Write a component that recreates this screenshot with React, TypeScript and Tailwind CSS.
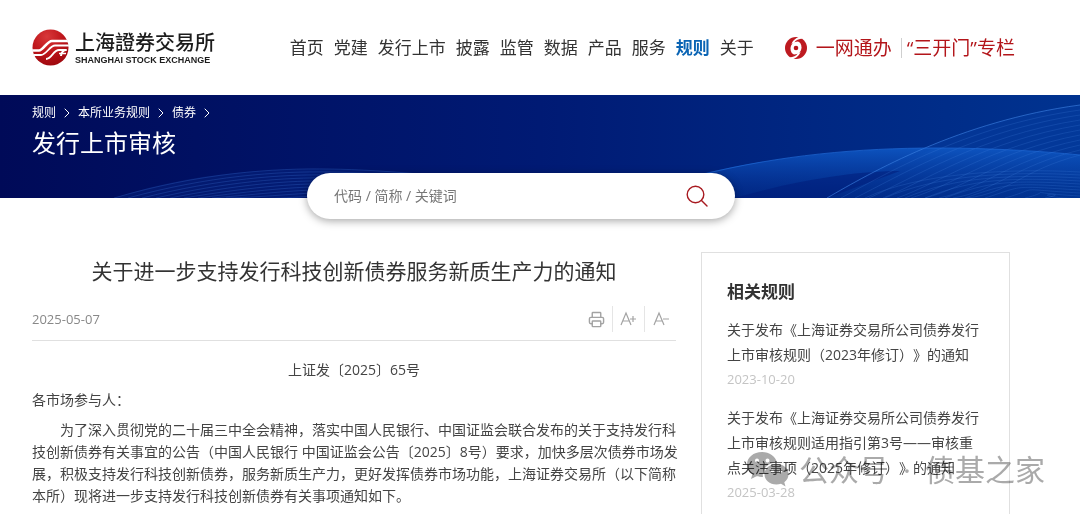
import { ChevronRight, Printer } from 'lucide-react';

const navItems = ['首页', '党建', '发行上市', '披露', '监管', '数据', '产品', '服务', '规则', '关于'];

const breadcrumbs = ['规则', '本所业务规则', '债券'];

const relatedRules = [
  { title: '关于发布《上海证券交易所公司债券发行上市审核规则（2023年修订）》的通知', date: '2023-10-20' },
  { title: '关于发布《上海证券交易所公司债券发行上市审核规则适用指引第3号——审核重点关注事项（2025年修订）》的通知', date: '2025-03-28' },
];

const steps = [1, 2, 3, 4, 5, 6, 7, 8, 9, 10];

function Logo() {
  return (
    <a href="#" className="flex shrink-0 items-center gap-[6px]">
      <svg viewBox="0 0 37 37" className="h-[37px] w-[37px]" aria-hidden="true">
        <defs>
          <radialGradient id="ball" cx="0.4" cy="0.2" r="0.85">
            <stop offset="0" stopColor="#d8383a" />
            <stop offset="0.5" stopColor="#bf161b" />
            <stop offset="1" stopColor="#9c070d" />
          </radialGradient>
          <clipPath id="ballClip">
            <circle cx="18.5" cy="18.5" r="18.5" />
          </clipPath>
        </defs>
        <circle cx="18.5" cy="18.5" r="18" fill="url(#ball)" />
        <g clipPath="url(#ballClip)" fill="none" stroke="#fff" strokeLinejoin="round">
          <path d="M0 21.5H7C11 21.5 15 12 20 12H37" strokeWidth="2.6" />
          <path d="M0 26H9C14 26 18 16.500 23 16.500H37" strokeWidth="1.8" />
          <path d="M14 30C20 30 21 21 27 21H34C32 21 29 23 29 27" strokeWidth="2" />
          <path d="M27 24.500H34" strokeWidth="1.400" />
        </g>
      </svg>
      <span className="flex flex-col text-[#1c1c1c]">
        <span className="font-['Noto_Sans_CJK_TC',sans-serif] text-[20px] leading-[24px] font-medium">上海證券交易所</span>
        <span className="font-['Liberation_Sans',sans-serif] text-[9px] leading-[12px] font-bold whitespace-nowrap">SHANGHAI STOCK EXCHANGE</span>
      </span>
    </a>
  );
}

function SwirlIcon() {
  return (
    <svg viewBox="0 0 24 24" className="h-6 w-6" aria-hidden="true">
      <circle cx="12" cy="12" r="11" fill="#bd1a20" />
      <path d="M14 5.500C9 5.500 6.500 9 6.500 12.500C6.500 15.500 8 18 10 18.500C15 18.500 17.500 15 17.500 11.500C17.500 8.500 16 6 14 5.500Z" fill="#fff" />
      <path d="M17 0C13 1.500 9 3.500 7.500 8L10 7C11.500 4 15 3 18.500 2.500Z" fill="#fff" />
      <path d="M7 24C11 22.500 15 20.500 16.500 16L14 17C12.500 20 9 21 5.500 21.500Z" fill="#fff" />
      <circle cx="12" cy="12" r="2.300" fill="#b9141a" />
    </svg>
  );
}

// Fans of thin curves sweeping over the blue banner
function BannerWaves() {
  return (
    <svg viewBox="0 0 1080 103" preserveAspectRatio="none" className="absolute inset-0 h-full w-full" aria-hidden="true">
      <defs>
        <linearGradient id="wave" x1="0" y1="0" x2="0" y2="1">
          <stop offset="0" stopColor="#0f5ac8" stopOpacity="0.85" />
          <stop offset="1" stopColor="#0a3fa8" stopOpacity="0.1" />
        </linearGradient>
      </defs>
      <path d="M114 103C190 78 270 73 330 74C400 75 440 80 520 92L560 103Z" fill="#0a2f8c" fillOpacity="0.35" />
      <path d="M660 90C740 66 840 53 936 53C990 53 1040 56 1080 60V103H660Z" fill="url(#wave)" />
      <path d="M827 103C870 78 960 26 1080 10V60C1020 54 980 53 936 53C900 65 870 80 827 103Z" fill="#0b4ab4" fillOpacity="0.3" />
      <path d="M735 103C800 84 860 76 900 76L827 103Z" fill="#001a78" fillOpacity="0.5" />
      <g fill="none" stroke="#3568c8" strokeWidth="0.7" strokeOpacity="0.45">
        {steps.map((n) => (
          <path key={n} d={`M${100 + n * 14} 103C${190 + n * 9} ${75 + n * 3} ${270 + n * 4} ${70 + n * 3} 330 ${71 + n * 3}S460 ${78 + n * 3} 560 ${94 + n * 3}`} />
        ))}
      </g>
      <g fill="none" stroke="#4a86e0" strokeWidth="0.7" strokeOpacity="0.3">
        {steps.map((n) => (
          <path key={n} d={`M${827 + n * 14} 103C${870 + n * 14} ${78 + n * 2} ${960 + n * 6} ${26 + n * 5} 1080 ${10 + n * 5}`} />
        ))}
        {steps.map((n) => (
          <path key={n} d={`M${845 + n * 20} 103C${900 + n * 18} ${76 + n * 2} 1010 ${70 + n * 3} 1080 ${74 + n * 3}`} />
        ))}
      </g>
      <path d="M827 103C870 78 960 26 1080 10" fill="none" stroke="#3f83e4" strokeOpacity="0.6" />
      <path d="M700 80C780 60 860 53 936 53C990 53 1040 56 1080 60" fill="none" stroke="#1f6ad6" strokeOpacity="0.7" />
    </svg>
  );
}

function SiteHeader() {
  return (
    <header className="flex h-[95px] items-center pr-[65px] pl-8">
      <Logo />
      <nav className="ml-auto flex gap-[10px] text-[17px] leading-6 whitespace-nowrap">
        {navItems.map((item) => (
          <a key={item} href="#" className={item === '规则' ? 'font-bold text-[#0a64b4]' : 'text-[#333]'}>
            {item}
          </a>
        ))}
      </nav>
      <div className="ml-[30px] flex items-center text-[19px] leading-6 whitespace-nowrap text-[#b3151a]">
        <a href="#" className="flex items-center gap-2">
          <SwirlIcon />
          一网通办
        </a>
        <a href="#" className="ml-[9px] flex items-center">
          <span className="mr-[5px] h-5 w-px bg-[#cfcfcf]" />
          “三开门”专栏
        </a>
      </div>
    </header>
  );
}

function Banner() {
  return (
    <section className="relative h-[103px] bg-linear-to-r from-[#000a58] via-[#001a74] to-[#003390] pt-2 pl-8 text-white">
      <BannerWaves />
      <div className="relative">
        <nav className="flex items-center text-[12px] leading-5">
          {breadcrumbs.map((item) => (
            <span key={item} className="flex items-center">
              <a href="#">{item}</a>
              <ChevronRight size={16} strokeWidth={1.5} className="mx-[3px]" />
            </span>
          ))}
        </nav>
        <h1 className="text-[24px] leading-10">发行上市审核</h1>
      </div>
    </section>
  );
}

function SearchBox() {
  return (
    <form className="relative mx-auto -mt-[25px] flex h-[46px] w-[428px] items-center rounded-full bg-white pr-[26px] pl-[27px] shadow-[0_2px_8px_rgba(0,0,0,0.35)]">
      <input
        type="text"
        aria-label="搜索"
        placeholder="代码 / 简称 / 关键词"
        className="min-w-0 flex-1 bg-transparent text-[14px] leading-6 outline-none placeholder:text-[#777]"
      />
      <button type="submit" aria-label="搜索">
        <svg viewBox="0 0 24 24" className="h-6 w-6" fill="none" stroke="#a81a20" strokeWidth="1.4" strokeLinecap="round">
          <circle cx="10.5" cy="10.5" r="8.3" />
          <path d="M16.500 16.500L22 22" />
        </svg>
      </button>
    </form>
  );
}

function Tools() {
  return (
    <div className="flex items-center text-[#a3a3a3]">
      <button type="button" aria-label="打印" className="px-[7px]">
        <Printer size={17} strokeWidth={2} />
      </button>
      <button type="button" aria-label="放大字体" className="flex h-[26px] items-center border-l border-[#e5e5e5] px-[7px]">
        <svg viewBox="0 0 17 16" className="h-4 w-[17px]" fill="none" stroke="currentColor" strokeWidth="1.2">
          <path d="M1 14L6 2L11 14M3 10H9M10 8H16M13 5V11" />
        </svg>
      </button>
      <button type="button" aria-label="缩小字体" className="flex h-[26px] items-center border-l border-[#e5e5e5] pr-[6px] pl-2">
        <svg viewBox="0 0 17 16" className="h-4 w-[17px]" fill="none" stroke="currentColor" strokeWidth="1.2">
          <path d="M1 14L6 2L11 14M3 10H9M10 8H16" />
        </svg>
      </button>
    </div>
  );
}

function Article() {
  return (
    <article className="min-w-0 flex-1 text-[14px] leading-[22px] text-[#444]">
      <h2 className="text-center text-[21px] leading-[38px] text-[#333]">关于进一步支持发行科技创新债券服务新质生产力的通知</h2>
      <div className="mt-2 flex h-[43px] items-center justify-between border-b border-[#e0e0e0]">
        <time className="text-[13px] text-[#888]">2025-05-07</time>
        <Tools />
      </div>
      <div className="-mr-3 mt-[18px] flex flex-col gap-2">
        <p className="mr-3 text-center">上证发〔2025〕65号</p>
        <p>各市场参与人：</p>
        <p className="indent-7">
          为了深入贯彻党的二十届三中全会精神，落实中国人民银行、中国证监会联合发布的关于支持发行科技创新债券有关事宜的公告（中国人民银行
          中国证监会公告〔2025〕8号）要求，加快多层次债券市场发展，积极支持发行科技创新债券，服务新质生产力，更好发挥债券市场功能，上海证券交易所（以下简称本所）现将进一步支持发行科技创新债券有关事项通知如下。
        </p>
      </div>
    </article>
  );
}

function RelatedRules() {
  return (
    <aside className="w-[309px] shrink-0 border border-b-0 border-[#e0e0e0] px-[25px] pt-[26px]">
      <h3 className="text-[17px] leading-[26px] font-bold text-[#333]">相关规则</h3>
      <ul className="mt-3 flex flex-col gap-[13px] text-[14px] leading-[25px]">
        {relatedRules.map((rule) => (
          <li key={rule.date}>
            <a href="#" className="block text-[#444]">{rule.title}</a>
            <time className="block text-[13px] text-[#c4c4c4]">{rule.date}</time>
          </li>
        ))}
      </ul>
    </aside>
  );
}

function Watermark() {
  return (
    <div className="pointer-events-none absolute right-[35px] bottom-[24px] flex items-center gap-[10px] text-[30px] leading-10 text-[#aaa] mix-blend-multiply">
      <svg viewBox="0 0 42 36" className="h-9 w-[42px]" fill="currentColor" aria-hidden="true">
        <path
          fillRule="evenodd"
          d="M15 0C6.500 0 0 5.500 0 12.500C0 16.500 2 19.800 5.500 22L4 27L9.500 24.200C11.500 24.800 13.500 25 16 25C14.500 17 21 10.500 30 10.500C28.500 4.500 22.500 0 15 0ZM10 6.500A2 2 0 1 1 10 10.500A2 2 0 1 1 10 6.500ZM20.500 6.500A2 2 0 1 1 20.500 10.500A2 2 0 1 1 20.500 6.500Z"
        />
        <path
          fillRule="evenodd"
          d="M29.500 12C22.500 12 17.500 16.500 17.500 22.300C17.500 28.200 22.500 32.500 29.500 32.500C31 32.500 32.500 32.200 34 31.800L38.500 34.500L37.300 30.300C40 28.300 41.500 25.500 41.500 22.300C41.500 16.500 36.500 12 29.500 12ZM25.500 17.500A1.600 1.600 0 1 1 25.500 20.700A1.600 1.600 0 1 1 25.500 17.500ZM33.500 17.500A1.600 1.600 0 1 1 33.500 20.700A1.600 1.600 0 1 1 33.500 17.500Z"
        />
      </svg>
      <span className="flex gap-[14px]">
        <span>公众号</span>
        <span>·</span>
        <span>债基之家</span>
      </span>
    </div>
  );
}

export default function App() {
  return (
    <div
      lang="zh-CN"
      className="relative flex min-h-screen flex-col bg-white font-['Open_Sans','Noto_Sans_CJK_SC',sans-serif] [text-spacing-trim:space-all]"
    >
      <SiteHeader />
      <Banner />
      <div className="flex flex-1 flex-col pr-[70px] pl-8">
        <SearchBox />
        <main className="mt-[33px] flex flex-1 gap-[25px]">
          <Article />
          <RelatedRules />
        </main>
      </div>
      <Watermark />
    </div>
  );
}
